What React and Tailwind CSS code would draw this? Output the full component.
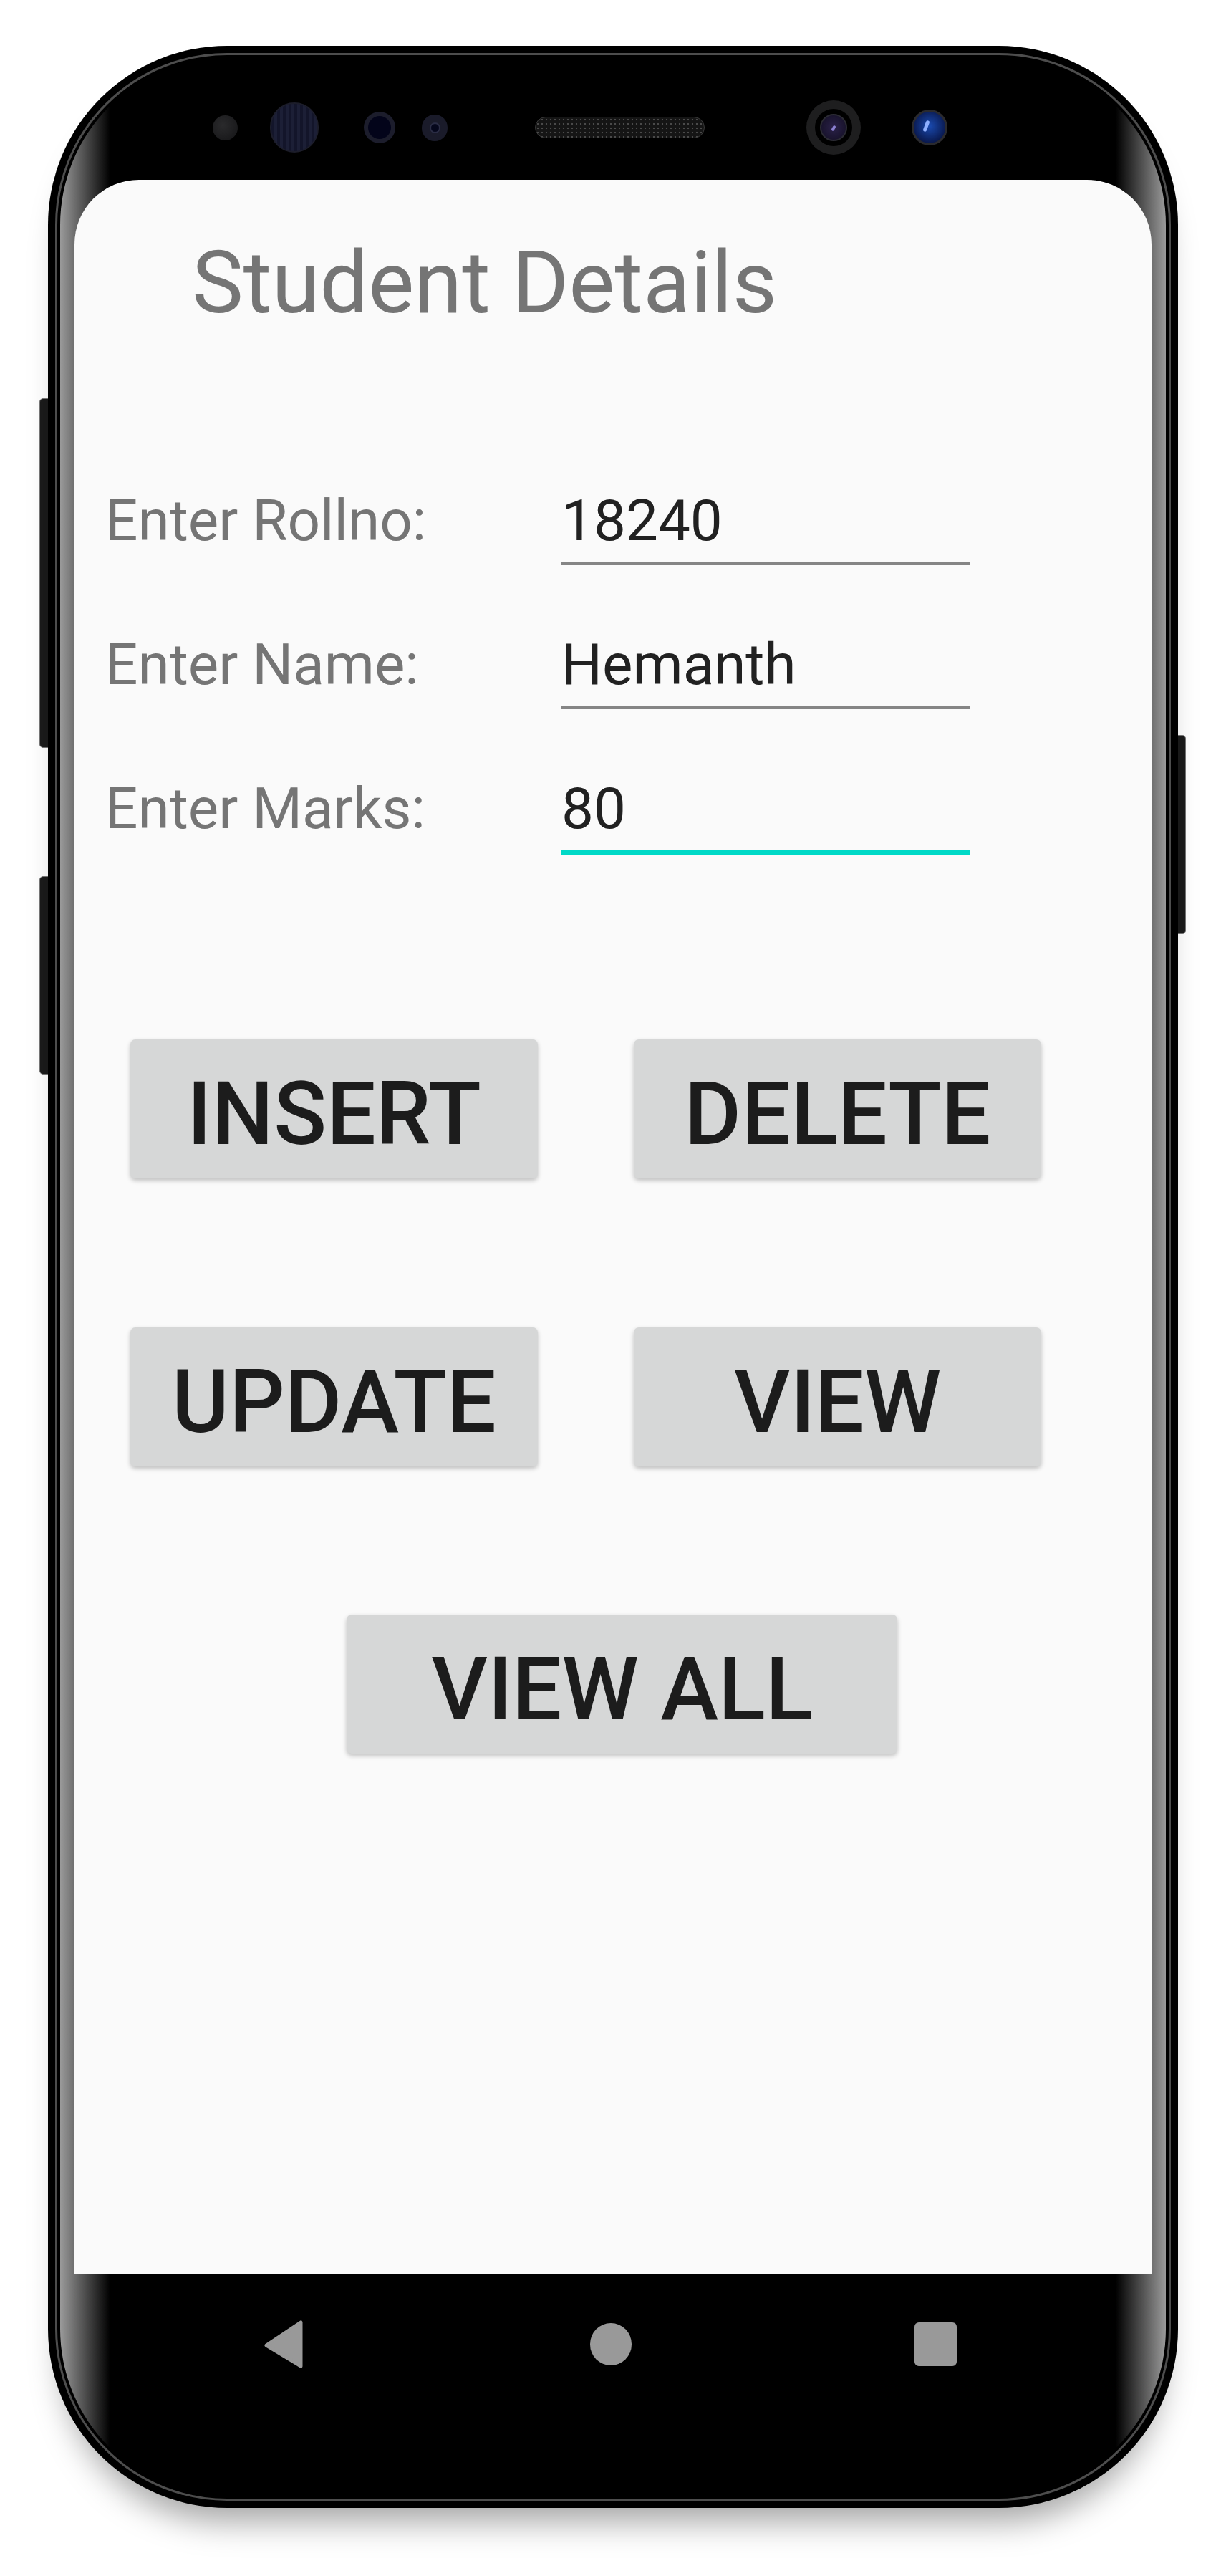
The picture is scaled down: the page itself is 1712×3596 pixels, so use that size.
import React from 'react';

const fields = [
  { label: 'Enter Rollno:', value: '18240', active: false },
  { label: 'Enter Name:', value: 'Hemanth', active: false },
  { label: 'Enter Marks:', value: '80', active: true },
];

function ActionButton({ children, className = '' }) {
  return (
    <button
      type="button"
      className={`h-[194px] rounded-[7px] bg-[#d6d7d7] pt-[16px] text-[122px] font-medium leading-none text-[#1c1c1c] shadow-[0_3px_6px_rgba(0,0,0,0.24)] ${className}`}
    >
      {children}
    </button>
  );
}

function CameraRow() {
  return (
    <div className="flex h-[170px] items-center pt-[24px]">
      <div className="ml-[193px] h-[35px] w-[35px] rounded-full bg-[radial-gradient(circle_at_40%_40%,#2a2a2c,#141416)]" />
      <div className="ml-[45px] h-[70px] w-[68px] rounded-full border-2 border-[#1c1d2a] bg-[repeating-linear-gradient(90deg,#13152a_0,#13152a_4px,#1c1f36_4px,#1c1f36_8px)]" />
      <div className="ml-[63px] flex h-[44px] w-[44px] items-center justify-center rounded-full bg-[#1c1d2c]">
        <div className="h-[32px] w-[32px] rounded-full bg-[#03041a]" />
      </div>
      <div className="ml-[37px] flex h-[37px] w-[36px] items-center justify-center rounded-full bg-[#1a1b2a]">
        <div className="h-[15px] w-[15px] rounded-full border-2 border-[#2a2c44] bg-[#05071c]" />
      </div>
      <div className="ml-[122px] h-[30px] w-[237px] rounded-full border border-[#3a3a3a] bg-[#151515] bg-[radial-gradient(#4a4a4a_1px,transparent_1.6px)] bg-[length:6px_6px]" />
      <div className="ml-[142px] flex h-[76px] w-[76px] items-center justify-center rounded-full bg-[#1e1e1f]">
        <div className="flex h-[52px] w-[52px] items-center justify-center rounded-full bg-black">
          <div className="relative h-[38px] w-[38px] rounded-full border-2 border-[#2b2b33] bg-[radial-gradient(circle_at_50%_50%,#2a2148,#120e22)]">
            <div className="absolute left-[15px] top-[14px] h-[8px] w-[4px] rotate-[30deg] rounded-full bg-[#8a7fd0]" />
          </div>
        </div>
      </div>
      <div className="relative ml-[71px] h-[50px] w-[50px] rounded-full border-[3px] border-[#2a2a2e] bg-[radial-gradient(circle_at_50%_45%,#1a4ab0,#0a1a50_70%,#050a20)]">
        <div className="absolute left-[15px] top-[12px] h-[16px] w-[5px] rotate-[20deg] rounded-full bg-[#8fb0ff]" />
      </div>
    </div>
  );
}

function NavBar() {
  return (
    <div className="flex h-[194px] items-center">
      <svg className="ml-[264px]" width="56" height="67" viewBox="0 0 56 67">
        <path d="M52 3 L52 64 L4 35 Z" fill="#999999" stroke="#999999" strokeWidth="5" strokeLinejoin="round" />
      </svg>
      <div className="ml-[400px] h-[59px] w-[58px] rounded-full bg-[#999999]" />
      <div className="ml-[395px] h-[61px] w-[59px] rounded-[6px] bg-[#999999]" />
    </div>
  );
}

export default function App() {
  return (
    <div
      className="h-[3596px] w-[1712px] overflow-hidden bg-white pl-[67px] pt-[64px]"
      style={{ fontFamily: 'Roboto, "Noto Sans", sans-serif' }}
    >
      <div className="relative h-[3437px] w-[1578px]">
        {/* side buttons */}
        <div className="absolute left-[-12px] top-[492px] h-[488px] w-[14px] rounded-l-[5px] border border-[#777] bg-[#1b1b1b]" />
        <div className="absolute left-[-12px] top-[1159px] h-[277px] w-[14px] rounded-l-[5px] border border-[#777] bg-[#1b1b1b]" />
        <div className="absolute right-[-11px] top-[962px] h-[278px] w-[13px] rounded-r-[5px] border border-[#777] bg-[#1b1b1b]" />

        <div className="relative h-full w-full rounded-[250px] bg-black p-[10px] shadow-[0_40px_45px_-20px_rgba(0,0,0,0.35)]">
          <div className="h-full w-full rounded-[240px] border-[3px] border-[#4d4d4d] bg-black p-[4px]">
            <div className="flex h-full w-full flex-col rounded-[233px] bg-[linear-gradient(to_right,#9a9a9a,#000_70px,#000_calc(100%-70px),#9a9a9a)] px-[20px]">
              <CameraRow />

              <div className="h-[2924px] w-[1504px] rounded-t-[90px] bg-[#fafafa]">
                <h1 className="ml-[164px] mt-[84px] text-[121px] font-normal leading-none text-[#757575]">
                  Student Details
                </h1>

                <div className="ml-[43px] mt-[231px] flex flex-col gap-[99px]">
                  {fields.map((f) => (
                    <div key={f.label} className="flex">
                      <div className="w-[637px] text-[80px] leading-none text-[#757575]">{f.label}</div>
                      <div className="w-[570px]">
                        <div className="h-[80px] text-[80px] leading-none text-[#212121]">{f.value}</div>
                        <div
                          className={
                            f.active
                              ? 'mt-[17px] h-[7px] bg-[#00d9c7]'
                              : 'mt-[17px] h-[5px] bg-[#858585]'
                          }
                        />
                      </div>
                    </div>
                  ))}
                </div>

                <div className="ml-[78px] mt-[258px] flex gap-[134px]">
                  <ActionButton className="w-[569px]">INSERT</ActionButton>
                  <ActionButton className="w-[569px]">DELETE</ActionButton>
                </div>
                <div className="ml-[78px] mt-[208px] flex gap-[134px]">
                  <ActionButton className="w-[569px]">UPDATE</ActionButton>
                  <ActionButton className="w-[569px]">VIEW</ActionButton>
                </div>
                <div className="ml-[380px] mt-[207px] flex">
                  <ActionButton className="w-[769px]">VIEW ALL</ActionButton>
                </div>
              </div>

              <NavBar />
            </div>
          </div>
        </div>
      </div>
    </div>
  );
}
